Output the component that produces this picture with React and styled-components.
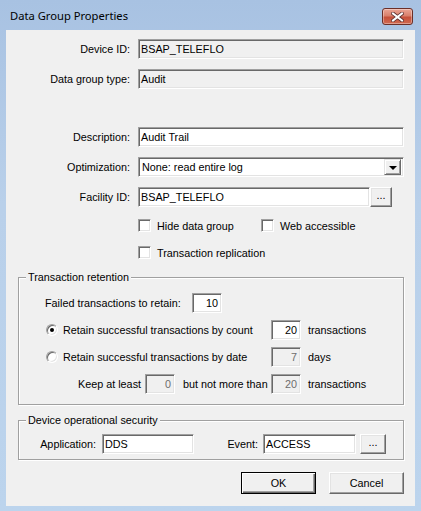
import styled, { createGlobalStyle } from "styled-components";

const GlobalStyle = createGlobalStyle`
  html, body {
    margin: 0;
    padding: 0;
    overflow: hidden;
  }
  body {
    font-family: "Liberation Sans", Arial, sans-serif;
    font-size: 10.8px;
    color: #000;
  }
`

const Window = styled.div`
  width: 421px;
  height: 511px;
  display: flex;
  flex-direction: column;
  background: linear-gradient(180deg, #a8c2e2 0%, #b9d0ea 40%, #bcd4ed 100%);
  box-sizing: border-box;
`

const TitleBar = styled.div`
  height: 30px;
  flex: none;
  display: flex;
  justify-content: space-between;
  align-items: flex-start;
  padding: 0 8px 0 10px;
  box-sizing: border-box;
`

const Title = styled.div`
  font-family: "Noto Sans", "Open Sans", sans-serif;
  font-size: 11.2px;
  line-height: 16px;
  padding-top: 8px;
  color: #000;
`

const CloseButton = styled.div`
  margin-top: 8px;
  width: 31px;
  height: 17px;
  box-sizing: border-box;
  border: 1px solid #6b2f28;
  border-radius: 3px;
  background: linear-gradient(180deg, #eaa595 0%, #d9806c 45%, #c6503a 55%, #d06a52 100%);
  box-shadow: inset 0 0 0 1px rgba(255, 255, 255, 0.35);
  display: flex;
  align-items: center;
  justify-content: center;
`

const Client = styled.div`
  flex: 1;
  margin: 0 6px 5px 6px;
  background: #f0f0f0;
  padding-top: 9px;
  box-sizing: border-box;
`

const FieldRow = styled.div`
  display: grid;
  grid-template-columns: 124px 266px;
  column-gap: 8px;
  align-items: center;
  height: 20px;
  margin-top: ${p => p.$top || 0}px;
`

const Label = styled.span`
  justify-self: end;
  white-space: nowrap;
`

const TextBox = styled.div`
  box-sizing: border-box;
  height: ${p => p.$h || 20}px;
  width: ${p => (p.$w ? `${p.$w}px` : "auto")};
  padding: ${p => (p.$right ? "0 3px 0 2px" : "0 2px")};
  background: ${p => (p.$disabled ? "#f0f0f0" : "#fff")};
  color: ${p => (p.$gray ? "#6d6d6d" : "#000")};
  border-top: 1px solid #a0a0a0;
  border-left: 1px solid #a0a0a0;
  border-bottom: 1px solid #fff;
  border-right: 1px solid #fff;
  box-shadow: inset 1px 1px #696969, inset -1px -1px #e3e3e3;
  display: flex;
  align-items: center;
  justify-content: ${p => (p.$right ? "flex-end" : "flex-start")};
  white-space: nowrap;
  overflow: hidden;
  flex: none;
`

const Select = styled(TextBox)`
  justify-content: space-between;
  padding: 0 2px 0 3px;
`

const DropArrow = styled.div`
  width: 17px;
  height: 16px;
  box-sizing: border-box;
  background: #f0f0f0;
  border: 1px solid;
  border-color: #e3e3e3 #696969 #696969 #e3e3e3;
  box-shadow: inset 1px 1px #fff, inset -1px -1px #a0a0a0;
  display: flex;
  align-items: center;
  justify-content: center;
  &::after {
    content: "";
    border-left: 4px solid transparent;
    border-right: 4px solid transparent;
    border-top: 4px solid #000;
    margin-top: 1px;
  }
`

const FieldGroup = styled.div`
  display: flex;
  align-items: center;
`

const Button = styled.div`
  box-sizing: border-box;
  width: ${p => p.$w}px;
  height: ${p => p.$h || 20}px;
  background: #f0f0f0;
  border: 1px solid;
  border-color: ${p => (p.$default ? "#000" : "#fff #696969 #696969 #fff")};
  box-shadow: ${p =>
    p.$default
      ? "inset 1px 1px #fff, inset -1px -1px #696969, inset -2px -2px #a0a0a0"
      : "inset -1px -1px #a0a0a0, inset 1px 1px #e3e3e3"};
  display: flex;
  align-items: center;
  justify-content: center;
  flex: none;
  line-height: 1;
  padding-bottom: ${p => (p.$dots ? "3px" : "0")};
`

const CheckRow = styled.div`
  display: flex;
  align-items: center;
  height: 13px;
  padding-left: 132px;
  margin-top: ${p => p.$top || 0}px;
`

const CheckItem = styled.label`
  display: flex;
  align-items: center;
  gap: 6px;
  width: ${p => (p.$w ? `${p.$w}px` : "auto")};
  white-space: nowrap;
`

const CheckBox = styled.span`
  width: 13px;
  height: 13px;
  box-sizing: border-box;
  flex: none;
  background: #fff;
  border-top: 1px solid #a0a0a0;
  border-left: 1px solid #a0a0a0;
  border-bottom: 1px solid #fff;
  border-right: 1px solid #fff;
  box-shadow: inset 1px 1px #696969, inset -1px -1px #e3e3e3;
`

const Group = styled.fieldset`
  margin: ${p => p.$top || 0}px 11px 0 12px;
  padding: ${p => p.$pad};
  border: 1px solid #a0a0a0;
  box-shadow: inset 1px 1px #fff, 1px 1px #fff;
  min-width: 0;
`

const Legend = styled.legend`
  margin-left: 7px;
  padding: 0 2px;
  line-height: 13px;
  background: #f0f0f0;
`

const RetRow = styled.div`
  display: flex;
  align-items: center;
  height: 20px;
  margin-top: ${p => p.$top || 0}px;
  padding-left: ${p => p.$indent || 26}px;
`

const RowText = styled.span`
  width: ${p => (p.$w ? `${p.$w}px` : "auto")};
  padding-left: ${p => p.$pl || 0}px;
  text-align: ${p => p.$align || "left"};
  box-sizing: border-box;
  white-space: nowrap;
  flex: none;
`

const Unit = styled.span`
  margin-left: 7px;
  white-space: nowrap;
`

const RadioOption = styled.label`
  display: flex;
  align-items: center;
  gap: 5px;
  width: 226px;
  padding-left: 1px;
  box-sizing: border-box;
  white-space: nowrap;
  flex: none;
`

const Radio = styled.span`
  width: 12px;
  height: 12px;
  box-sizing: border-box;
  border-radius: 50%;
  flex: none;
  border: 1px solid;
  border-color: #a0a0a0 #fff #fff #a0a0a0;
  box-shadow: inset 1px 1px #696969, inset -1px -1px #e3e3e3;
  background: #fff;
  display: flex;
  align-items: center;
  justify-content: center;
  &::after {
    content: "";
    width: 4px;
    height: 4px;
    border-radius: 50%;
    background: ${p => (p.$checked ? "#000" : "transparent")};
  }
`

const SecRow = styled.div`
  display: flex;
  align-items: center;
  height: 20px;
`

const ButtonBar = styled.div`
  display: flex;
  justify-content: flex-end;
  gap: 13px;
  padding-right: 11px;
  margin-top: 12px;
`

const CloseGlyph = () => (
  <svg width="13" height="10" viewBox="0 0 13 10">
    <path d="M2 1.5 L11 8.5 M11 1.5 L2 8.5" stroke="#5a3030" strokeWidth="3.6" strokeLinecap="square" />
    <path d="M2 1.5 L11 8.5 M11 1.5 L2 8.5" stroke="#fff" strokeWidth="2" strokeLinecap="square" />
  </svg>
)

export default function App() {
  return (
    <Window>
      <GlobalStyle />
      <TitleBar>
        <Title>Data Group Properties</Title>
        <CloseButton>
          <CloseGlyph />
        </CloseButton>
      </TitleBar>

      <Client>
        <FieldRow>
          <Label>Device ID:</Label>
          <TextBox $disabled>BSAP_TELEFLO</TextBox>
        </FieldRow>
        <FieldRow $top={10}>
          <Label>Data group type:</Label>
          <TextBox $disabled>Audit</TextBox>
        </FieldRow>

        <FieldRow $top={38}>
          <Label>Description:</Label>
          <TextBox>Audit Trail</TextBox>
        </FieldRow>
        <FieldRow $top={10}>
          <Label>Optimization:</Label>
          <Select>
            <span>None: read entire log</span>
            <DropArrow />
          </Select>
        </FieldRow>
        <FieldRow $top={10}>
          <Label>Facility ID:</Label>
          <FieldGroup>
            <TextBox $w={232}>BSAP_TELEFLO</TextBox>
            <Button $w={22} $dots>...</Button>
          </FieldGroup>
        </FieldRow>

        <CheckRow $top={12}>
          <CheckItem $w={123}>
            <CheckBox />
            Hide data group
          </CheckItem>
          <CheckItem>
            <CheckBox />
            Web accessible
          </CheckItem>
        </CheckRow>
        <CheckRow $top={14}>
          <CheckItem>
            <CheckBox />
            Transaction replication
          </CheckItem>
        </CheckRow>

        <Group $top={12} $pad="9px 0 10px 0">
          <Legend>Transaction retention</Legend>
          <RetRow>
            <RowText $w={147}>Failed transactions to retain:</RowText>
            <TextBox $w={30} $right>10</TextBox>
          </RetRow>
          <RetRow $top={7}>
            <RadioOption>
              <Radio $checked />
              Retain successful transactions by count
            </RadioOption>
            <TextBox $w={30} $right>20</TextBox>
            <Unit>transactions</Unit>
          </RetRow>
          <RetRow $top={7}>
            <RadioOption>
              <Radio />
              Retain successful transactions by date
            </RadioOption>
            <TextBox $w={30} $right $disabled $gray>7</TextBox>
            <Unit>days</Unit>
          </RetRow>
          <RetRow $top={7} $indent={59}>
            <RowText $w={67}>Keep at least</RowText>
            <TextBox $w={30} $right $disabled $gray>0</TextBox>
            <RowText $w={96} $pl={8}>but not more than</RowText>
            <TextBox $w={30} $right $disabled $gray>20</TextBox>
            <Unit>transactions</Unit>
          </RetRow>
        </Group>

        <Group $top={9} $pad="7px 0 5px 0">
          <Legend>Device operational security</Legend>
          <SecRow>
            <RowText $w={77} $align="right">Application:</RowText>
            <TextBox $w={92} style={{ marginLeft: 6 }}>DDS</TextBox>
            <RowText $w={64} $align="right">Event:</RowText>
            <TextBox $w={93} style={{ marginLeft: 5 }}>ACCESS</TextBox>
            <Button $w={26} $dots style={{ marginLeft: 4 }}>...</Button>
          </SecRow>
        </Group>

        <ButtonBar>
          <Button $w={75} $h={22} $default>OK</Button>
          <Button $w={75} $h={22}>Cancel</Button>
        </ButtonBar>
      </Client>
    </Window>
  );
}
